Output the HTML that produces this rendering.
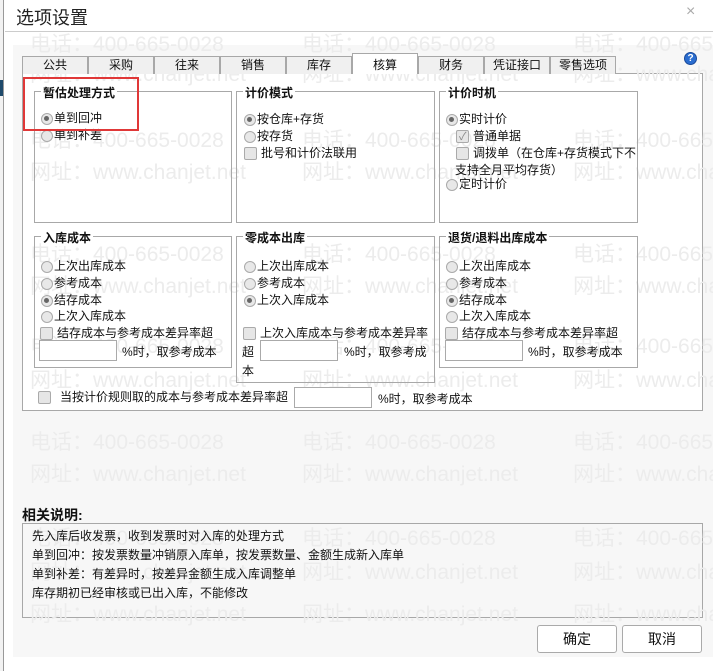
<!DOCTYPE html>
<html><head><meta charset="utf-8"><style>
*{margin:0;padding:0;box-sizing:border-box}
body{width:713px;height:671px;background:#fff;position:relative;overflow:hidden;font-family:"Liberation Sans","Noto Sans CJK SC",sans-serif;font-size:12px;color:#111}
.a{position:absolute;white-space:nowrap;z-index:2}
.bg{position:absolute;z-index:0}
.wm{position:absolute;color:#ececec;font-size:21px;white-space:nowrap;z-index:1;pointer-events:none}
.gb{position:absolute;border:1px solid #a8a8a8;z-index:2}
.gt{position:absolute;top:-8px;left:6px;background:#fff;padding:0 2px;font-weight:bold;font-size:12px}
.r{position:absolute;white-space:nowrap;padding-left:13px;line-height:16px;z-index:2}
.r:before{content:"";position:absolute;left:0;top:3px;width:10px;height:10px;border-radius:50%;border:1px solid #aaa;background:#e8e8e8}
.r.on:after{content:"";position:absolute;left:3px;top:6px;width:5px;height:5px;border-radius:50%;background:#666}
.c{position:absolute;white-space:nowrap;padding-left:19px;line-height:16px;z-index:2}
.c:before{content:"";position:absolute;left:2px;top:2px;width:11px;height:11px;border:1px solid #aaa;border-radius:2px;background:#e6e6e6}
.in{position:absolute;border:1px solid #aaa;background:#fff;height:21px;z-index:2}
.tab{position:absolute;top:56px;height:18px;border:1px solid #a8a8a8;border-bottom:none;background:#f0f0f0;text-align:center;line-height:17px;font-size:12px;z-index:2}
</style></head><body>
<div class="bg" style="left:0;top:0;width:4px;height:671px;background:#f2f2f2;border-right:1px solid #999"></div>
<div class="bg" style="left:0;top:80px;width:3px;height:16px;background:#1f4a6b"></div>
<div class="a" style="left:16px;top:4px;font-size:18px;color:#222">选项设置</div>
<div class="a" style="left:686px;top:3px;font-size:16px;color:#aaa">×</div>
<div class="bg" style="left:5px;top:31px;width:708px;height:1px;background:#ccc"></div>
<div class="bg" style="left:13px;top:45px;width:700px;height:612px;background:#f7f7f7"></div>
<div class="a" style="left:684px;top:52px;width:13px;height:13px;border-radius:50%;background:#2a6dd0;border:1px solid #1a4a9a;color:#fff;font-size:10px;line-height:11px;text-align:center;font-weight:bold">?</div>
<div class="bg" style="left:22px;top:73px;width:681px;height:338px;border:1px solid #a8a8a8;background:#fff"></div>
<div class="tab" style="left:22px;width:66px">公共</div>
<div class="tab" style="left:88px;width:66px">采购</div>
<div class="tab" style="left:154px;width:66px">往来</div>
<div class="tab" style="left:220px;width:66px">销售</div>
<div class="tab" style="left:286px;width:66px">库存</div>
<div class="tab" style="left:352px;top:53px;height:21px;width:66px;background:#fff;line-height:22px">核算</div>
<div class="tab" style="left:418px;width:66px">财务</div>
<div class="tab" style="left:484px;width:66px">凭证接口</div>
<div class="tab" style="left:550px;width:66px">零售选项</div>

<div class="gb" style="left:34px;top:91px;width:198px;height:132px"><span class="gt">暂估处理方式</span></div>
<div class="r on" style="left:41px;top:110px">单到回冲</div>
<div class="r" style="left:41px;top:127px">单到补差</div>
<div class="a" style="left:23px;top:77px;width:116px;height:54px;border:2px solid #e03838;z-index:6"></div>

<div class="gb" style="left:236px;top:91px;width:199px;height:132px"><span class="gt">计价模式</span></div>
<div class="r on" style="left:244px;top:111px">按仓库+存货</div>
<div class="r" style="left:244px;top:128px">按存货</div>
<div class="c" style="left:242px;top:145px">批号和计价法联用</div>

<div class="gb" style="left:439px;top:91px;width:199px;height:132px"><span class="gt">计价时机</span></div>
<div class="r on" style="left:446px;top:111px">实时计价</div>
<div class="c" style="left:454px;top:128px">普通单据</div>
<div class="a" style="left:459px;top:128px;color:#888;font-size:11px;z-index:3">✓</div>
<div class="c" style="left:454px;top:145px">调拨单（在仓库+存货模式下不</div>
<div class="a" style="left:455px;top:161px">支持全月平均存货）</div>
<div class="r" style="left:446px;top:176px">定时计价</div>

<div class="gb" style="left:34px;top:236px;width:198px;height:132px"><span class="gt">入库成本</span></div>
<div class="r" style="left:41px;top:258px">上次出库成本</div>
<div class="r" style="left:41px;top:275px">参考成本</div>
<div class="r on" style="left:41px;top:292px">结存成本</div>
<div class="r" style="left:41px;top:308px">上次入库成本</div>
<div class="c" style="left:38px;top:325px">结存成本与参考成本差异率超</div>
<div class="in" style="left:39px;top:340px;width:78px"></div>
<div class="a" style="left:122px;top:343px">%时，取参考成本</div>

<div class="gb" style="left:236px;top:236px;width:199px;height:147px"><span class="gt">零成本出库</span></div>
<div class="r" style="left:244px;top:258px">上次出库成本</div>
<div class="r" style="left:244px;top:275px">参考成本</div>
<div class="r on" style="left:244px;top:292px">上次入库成本</div>
<div class="c" style="left:241px;top:325px">上次入库成本与参考成本差异率</div>
<div class="a" style="left:242px;top:343px">超</div>
<div class="in" style="left:260px;top:340px;width:78px"></div>
<div class="a" style="left:344px;top:343px">%时，取参考成</div>
<div class="a" style="left:242px;top:362px">本</div>

<div class="gb" style="left:439px;top:236px;width:199px;height:132px"><span class="gt">退货/退料出库成本</span></div>
<div class="r" style="left:446px;top:258px">上次出库成本</div>
<div class="r" style="left:446px;top:275px">参考成本</div>
<div class="r on" style="left:446px;top:292px">结存成本</div>
<div class="r" style="left:446px;top:308px">上次入库成本</div>
<div class="c" style="left:443px;top:325px">结存成本与参考成本差异率超</div>
<div class="in" style="left:445px;top:340px;width:78px"></div>
<div class="a" style="left:528px;top:343px">%时，取参考成本</div>

<div class="c" style="left:36px;top:389px;padding-left:24px">当按计价规则取的成本与参考成本差异率超</div>
<div class="in" style="left:294px;top:387px;width:78px"></div>
<div class="a" style="left:378px;top:390px">%时，取参考成本</div>

<div class="a" style="left:22px;top:505px;font-size:14px;font-weight:bold">相关说明:</div>
<div class="bg" style="left:22px;top:523px;width:681px;height:95px;border:1px solid #a8a8a8;background:#f7f7f7"></div>
<div class="a" style="left:32px;top:527px;line-height:19px;font-size:12px">先入库后收发票，收到发票时对入库的处理方式<br>单到回冲：按发票数量冲销原入库单，按发票数量、金额生成新入库单<br>单到补差：有差异时，按差异金额生成入库调整单<br>库存期初已经审核或已出入库，不能修改</div>
<div class="a" style="left:537px;top:625px;width:80px;height:28px;border:1px solid #aaa;border-radius:3px;background:#fff;text-align:center;line-height:27px;font-size:14px">确定</div>
<div class="a" style="left:622px;top:625px;width:80px;height:28px;border:1px solid #aaa;border-radius:3px;background:#fff;text-align:center;line-height:27px;font-size:14px">取消</div>

<div class="wm" style="left:30px;top:28px">电话：400-665-0028</div><div class="wm" style="left:302px;top:28px">电话：400-665-0028</div><div class="wm" style="left:573px;top:28px">电话：400-665-0028</div>
<div class="wm" style="left:30px;top:58px">网址：www.chanjet.net</div><div class="wm" style="left:302px;top:58px">网址：www.chanjet.net</div><div class="wm" style="left:573px;top:58px">网址：www.chanjet.net</div>
<div class="wm" style="left:30px;top:124px">电话：400-665-0028</div><div class="wm" style="left:302px;top:124px">电话：400-665-0028</div><div class="wm" style="left:573px;top:124px">电话：400-665-0028</div>
<div class="wm" style="left:30px;top:156px">网址：www.chanjet.net</div><div class="wm" style="left:302px;top:156px">网址：www.chanjet.net</div><div class="wm" style="left:573px;top:156px">网址：www.chanjet.net</div>
<div class="wm" style="left:30px;top:238px">电话：400-665-0028</div><div class="wm" style="left:302px;top:238px">电话：400-665-0028</div><div class="wm" style="left:573px;top:238px">电话：400-665-0028</div>
<div class="wm" style="left:30px;top:270px">网址：www.chanjet.net</div><div class="wm" style="left:302px;top:270px">网址：www.chanjet.net</div><div class="wm" style="left:573px;top:270px">网址：www.chanjet.net</div>
<div class="wm" style="left:30px;top:330px">电话：400-665-0028</div><div class="wm" style="left:302px;top:330px">电话：400-665-0028</div><div class="wm" style="left:573px;top:330px">电话：400-665-0028</div>
<div class="wm" style="left:30px;top:364px">网址：www.chanjet.net</div><div class="wm" style="left:302px;top:364px">网址：www.chanjet.net</div><div class="wm" style="left:573px;top:364px">网址：www.chanjet.net</div>
<div class="wm" style="left:30px;top:426px">电话：400-665-0028</div><div class="wm" style="left:302px;top:426px">电话：400-665-0028</div><div class="wm" style="left:573px;top:426px">电话：400-665-0028</div>
<div class="wm" style="left:30px;top:458px">网址：www.chanjet.net</div><div class="wm" style="left:302px;top:458px">网址：www.chanjet.net</div><div class="wm" style="left:573px;top:458px">网址：www.chanjet.net</div>
<div class="wm" style="left:30px;top:522px">电话：400-665-0028</div><div class="wm" style="left:302px;top:522px">电话：400-665-0028</div><div class="wm" style="left:573px;top:522px">电话：400-665-0028</div>
<div class="wm" style="left:30px;top:556px">网址：www.chanjet.net</div><div class="wm" style="left:302px;top:556px">网址：www.chanjet.net</div><div class="wm" style="left:573px;top:556px">网址：www.chanjet.net</div>
<div class="wm" style="left:30px;top:598px">网址：www.chanjet.net</div><div class="wm" style="left:302px;top:598px">网址：www.chanjet.net</div><div class="wm" style="left:573px;top:598px">网址：www.chanjet.net</div>
</body></html>
